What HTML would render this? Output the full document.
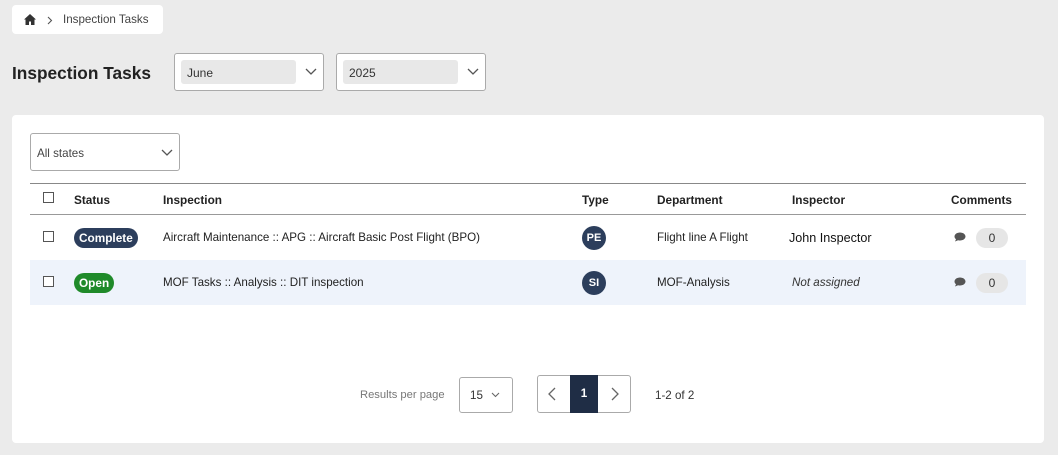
<!DOCTYPE html>
<html><head><meta charset="utf-8"><style>
*{box-sizing:border-box;margin:0;padding:0}
body{width:1058px;height:455px;background:#ebebeb;font-family:"Liberation Sans",sans-serif;color:#222;position:relative;overflow:hidden;font-size:11.6px}
.a{position:absolute}
.box{background:#fff;border:1px solid #aaa;border-radius:3px}
.cb{position:absolute;width:11px;height:11px;border:1px solid #555;background:#fff}
.th{position:absolute;top:193px;font-weight:bold;font-size:11.8px}
.pill{position:absolute;color:#fff;font-weight:bold;font-size:11.8px;border-radius:11px;padding:3px 5px;line-height:14px}
.circ{position:absolute;width:24px;height:24px;border-radius:50%;background:#2c3e5c;color:#fff;font-weight:bold;font-size:11px;text-align:center;line-height:24px}
.cnt{position:absolute;width:32px;height:20px;border-radius:10px;background:#e6e6e6;text-align:center;line-height:20px;font-size:12px;color:#333}
</style></head><body>
<div class="a" style="left:12px;top:5px;width:151px;height:29px;background:#fff;border-radius:4px"></div>
<svg class="a" style="left:24px;top:14px" width="12" height="11" viewBox="0 0 12 11"><path d="M6 0L0 5.5h1.5V11h3.5V7.5h2V11h3.5V5.5H12z" fill="#333"/></svg>
<svg class="a" style="left:47px;top:16px" width="6" height="9"><path d="M1 1l3.5 3.5L1 8" stroke="#555" stroke-width="1.1" fill="none"/></svg>
<div class="a" style="left:63px;top:13px;font-size:11.6px;color:#444">Inspection Tasks</div>
<div class="a" style="left:12px;top:63px;font-size:17.3px;font-weight:bold;color:#222">Inspection Tasks</div>

<div class="a box" style="left:174px;top:53px;width:150px;height:38px"></div>
<div class="a" style="left:181px;top:60px;width:115px;height:24px;background:#e8e8e8;border-radius:3px;font-size:12px;padding:6px 6px;color:#333">June</div>
<svg class="a" style="left:305px;top:68px" width="12" height="8"><path d="M1 1l5 5 5-5" stroke="#555" stroke-width="1.3" fill="none"/></svg>
<div class="a box" style="left:336px;top:53px;width:150px;height:38px"></div>
<div class="a" style="left:343px;top:60px;width:115px;height:24px;background:#e8e8e8;border-radius:3px;font-size:12px;padding:6px 6px;color:#333">2025</div>
<svg class="a" style="left:467px;top:68px" width="12" height="8"><path d="M1 1l5 5 5-5" stroke="#555" stroke-width="1.3" fill="none"/></svg>

<div class="a" style="left:12px;top:115px;width:1032px;height:328px;background:#fff;border-radius:4px"></div>
<div class="a box" style="left:30px;top:133px;width:150px;height:38px;padding:13px 6px;font-size:11.6px;color:#444">All states</div>
<svg class="a" style="left:161px;top:149px" width="12" height="8"><path d="M1 1l5 5 5-5" stroke="#555" stroke-width="1.3" fill="none"/></svg>

<div class="a" style="left:30px;top:183px;width:996px;height:1px;background:#888"></div>
<div class="a" style="left:30px;top:214px;width:996px;height:1px;background:#999"></div>
<div class="a" style="left:30px;top:260px;width:996px;height:45px;background:#eef3fb"></div>

<div class="cb" style="left:43px;top:192px"></div>
<div class="th" style="left:74px">Status</div>
<div class="th" style="left:163px">Inspection</div>
<div class="th" style="left:582px">Type</div>
<div class="th" style="left:657px">Department</div>
<div class="th" style="left:792px">Inspector</div>
<div class="th" style="left:951px">Comments</div>

<div class="cb" style="left:43px;top:231px"></div>
<div class="pill" style="left:74px;top:228px;background:#2c3e5c">Complete</div>
<div class="a" style="left:163px;top:231px">Aircraft Maintenance :: APG :: Aircraft Basic Post Flight (BPO)</div>
<div class="circ" style="left:582px;top:226px">PE</div>
<div class="a" style="left:657px;top:231px">Flight line A Flight</div>
<div class="a" style="left:789px;top:231px;font-size:12.6px;color:#111">John Inspector</div>
<svg class="a" style="left:954px;top:232px" width="12" height="10"><path d="M6 0.5C9 0.5 11.5 2.3 11.5 4.5S9 8.5 6 8.5c-.7 0-1.3-.1-1.9-.3L1 9.5l1-2.2C1 6.5 0.5 5.5 0.5 4.5 0.5 2.3 3 0.5 6 0.5z" fill="#555"/></svg>
<div class="cnt" style="left:976px;top:228px">0</div>

<div class="cb" style="left:43px;top:276px"></div>
<div class="pill" style="left:74px;top:273px;background:#1f8a2a">Open</div>
<div class="a" style="left:163px;top:276px">MOF Tasks :: Analysis :: DIT inspection</div>
<div class="circ" style="left:582px;top:271px">SI</div>
<div class="a" style="left:657px;top:276px">MOF-Analysis</div>
<div class="a" style="left:792px;top:276px;font-style:italic;color:#333">Not assigned</div>
<svg class="a" style="left:954px;top:277px" width="12" height="10"><path d="M6 0.5C9 0.5 11.5 2.3 11.5 4.5S9 8.5 6 8.5c-.7 0-1.3-.1-1.9-.3L1 9.5l1-2.2C1 6.5 0.5 5.5 0.5 4.5 0.5 2.3 3 0.5 6 0.5z" fill="#555"/></svg>
<div class="cnt" style="left:976px;top:273px">0</div>

<div class="a" style="left:360px;top:389px;color:#777;font-size:11.2px">Results per page</div>
<div class="a box" style="left:459px;top:377px;width:54px;height:36px;padding:11px 10px;color:#333">15</div>
<svg class="a" style="left:491px;top:392px" width="9" height="6"><path d="M1 1l3.5 3.5L8 1" stroke="#666" stroke-width="1.1" fill="none"/></svg>
<div class="a box" style="left:537px;top:375px;width:94px;height:38px"></div>
<div class="a" style="left:570px;top:375px;width:28px;height:38px;background:#1f2d45;color:#fff;font-weight:bold;text-align:center;line-height:38px">1</div>
<svg class="a" style="left:548px;top:387px" width="8" height="14"><path d="M7 1L1 7l6 6" stroke="#666" stroke-width="1.3" fill="none"/></svg>
<svg class="a" style="left:611px;top:387px" width="8" height="14"><path d="M1 1l6 6-6 6" stroke="#666" stroke-width="1.3" fill="none"/></svg>
<div class="a" style="left:655px;top:389px;color:#333">1-2 of 2</div>
</body></html>
